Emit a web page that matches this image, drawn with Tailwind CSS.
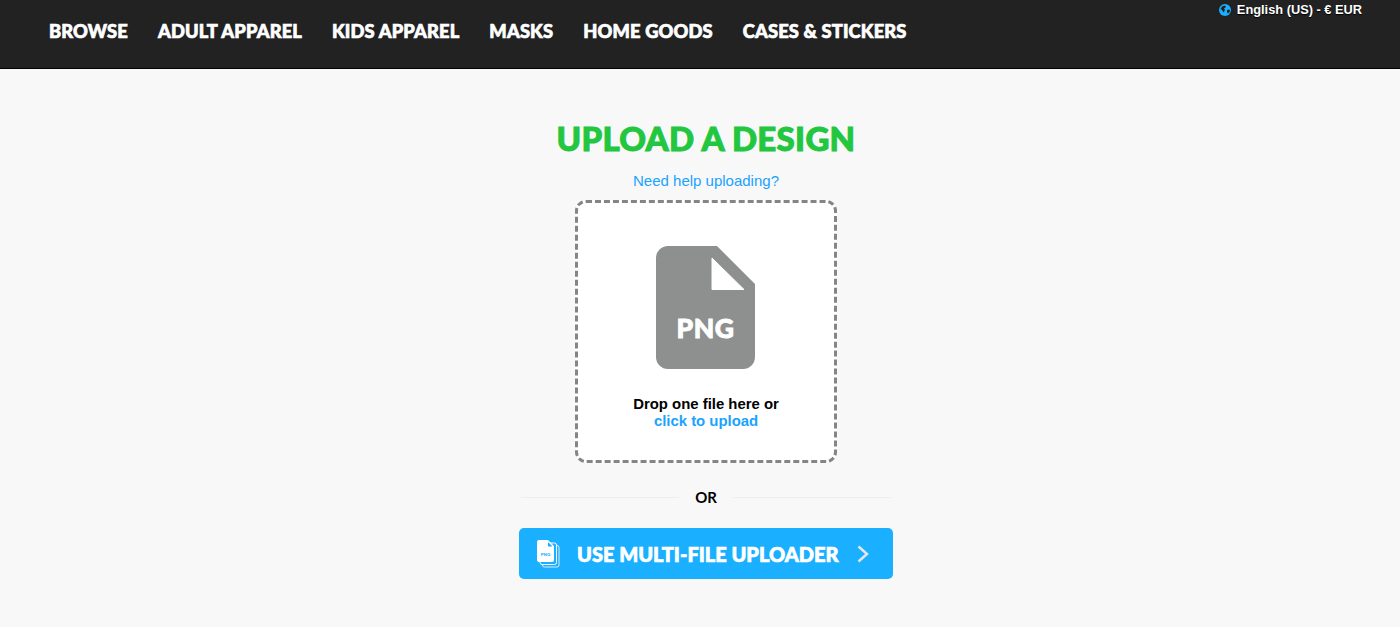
<!DOCTYPE html>
<html lang="en">
<head>
<meta charset="utf-8">
<title>Upload a design</title>
<script src="https://cdn.jsdelivr.net/npm/@tailwindcss/browser@4"></script>
</head>
<body class="bg-[#f8f8f8] font-['Liberation_Sans',sans-serif] h-[627px] overflow-hidden">
<header class="relative h-[69px] bg-[#222222] border-b border-black">
  <nav class="flex items-center gap-[30px] pl-[49px] pt-[19px] h-[24px] box-content font-['Lato',sans-serif] font-black text-[18.3px] leading-[24px] tracking-[0.15px] text-white [-webkit-text-stroke:0.7px_#fff]">
    <a>BROWSE</a><a>ADULT APPAREL</a><a>KIDS APPAREL</a><a>MASKS</a><a>HOME GOODS</a><a>CASES &amp; STICKERS</a>
  </nav>
  <div class="absolute right-[38px] top-[3px] flex items-center gap-[6px] text-[12.8px] leading-[14px] font-bold text-white [text-shadow:0_1px_1px_#000]">
    <svg width="12" height="12" viewBox="0 0 12 12"><circle cx="6" cy="6" r="6" fill="#1aafff"/><path d="M3 2.5l3-1 1 1.500-2 1.500 1 1.500-1.500 2.500-1.500-2.500-1.500-1zM8 6l2.500-.5.500 2-2 2-1-1.500z" fill="#222"/></svg>
    <span>English (US) - € EUR</span>
  </div>
</header>
<main class="flex flex-col items-center pl-[12px]">
  <h1 class="mt-[49px] font-['Lato',sans-serif] font-black text-[33px] leading-[40px] tracking-[0.3px] text-[#22c63f] [-webkit-text-stroke:1px_#22c63f]">UPLOAD A DESIGN</h1>
  <a class="mt-[14px] text-[15px] leading-[18px] text-[#1aa3ff]">Need help uploading?</a>
  <div class="mt-[10px] w-[262px] h-[263px] bg-white border-[3px] border-dashed border-[#858585] rounded-[11px] flex flex-col items-center">
    <svg class="mt-[43px] -ml-px" width="99" height="123" viewBox="0 0 99 123">
      <path d="M12 0H61L99 38V111A12 12 0 0 1 87 123H12A12 12 0 0 1 0 111V12A12 12 0 0 1 12 0Z" fill="#8e908f"/>
      <path d="M56 12L88 43.500H56Z" fill="#fff" stroke="#fff" stroke-width="1" stroke-linejoin="round"/>
      <text x="49.500" y="92" text-anchor="middle" font-family="Lato" font-weight="900" font-size="26.500" letter-spacing="0.6" stroke="#fff" stroke-width="0.9" fill="#fff">PNG</text>
    </svg>
    <p class="mt-[27px] text-[14.9px] leading-[17px] font-bold text-center text-black">Drop one file here or<br><span class="text-[#1aa3ff]">click to upload</span></p>
  </div>
  <div class="mt-[25px] w-[370px] flex items-center gap-[16px]">
    <div class="flex-1 h-px bg-[#eeeeee]"></div>
    <span class="font-['Lato',sans-serif] font-bold text-[15px] leading-[18px] text-black">OR</span>
    <div class="flex-1 h-px bg-[#eeeeee]"></div>
  </div>
  <button class="mt-[22px] w-[374px] h-[51px] bg-[#1aafff] rounded-[5px] flex items-center pl-[18px] text-white">
    <svg width="23" height="28" viewBox="0 0 23 28">
      <rect x="5.500" y="5.500" width="16.500" height="21.500" rx="2" fill="#1aafff" stroke="#d6efff"/>
      <rect x="3" y="3" width="16.500" height="21.500" rx="2" fill="#1aafff" stroke="#fff"/>
      <path d="M2 0H11L17 6V20A2 2 0 0 1 15 22H2A2 2 0 0 1 0 20V2A2 2 0 0 1 2 0Z" fill="#fff"/>
      <path d="M11 2L15.500 6.500H11Z" fill="#1aafff"/>
      <text x="8.500" y="16" text-anchor="middle" font-family="Lato" font-weight="900" font-size="4.500" fill="#1aafff">PNG</text>
    </svg>
    <span class="ml-[17px] font-['Lato',sans-serif] font-black text-[20px] leading-[26px] whitespace-nowrap [-webkit-text-stroke:0.7px_#fff]">USE MULTI-FILE UPLOADER</span>
    <svg class="ml-[19px]" width="12" height="18" viewBox="0 0 12 18"><path d="M1.500 1.500L10 9L1.500 16.500" fill="none" stroke="#e3e8ea" stroke-width="2.500"/></svg>
  </button>
</main>
</body>
</html>
